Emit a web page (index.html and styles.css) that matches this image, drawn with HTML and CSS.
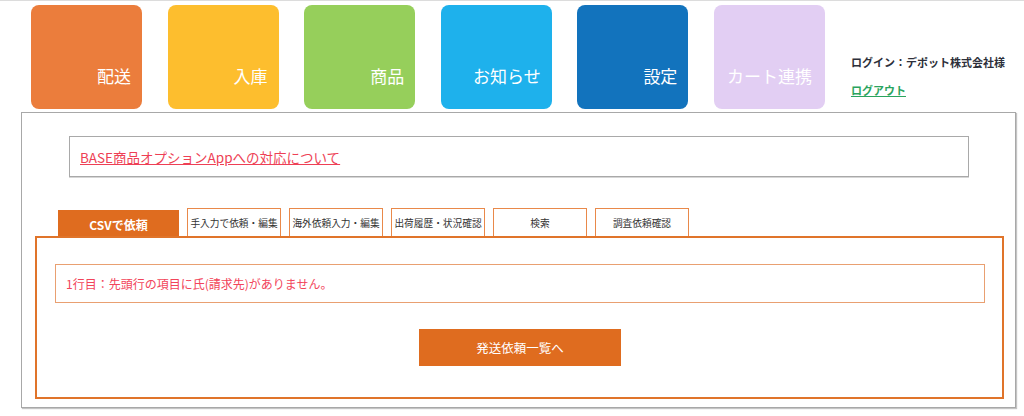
FILE: index.html
```html
<!DOCTYPE html>
<html lang="ja">
<head>
<meta charset="utf-8">
<title>CSVで依頼</title>
<link rel="stylesheet" href="styles.css">
</head>
<body>
<header class="top">
  <nav class="tiles">
    <a class="tile tile-ship" href="#">配送</a>
    <a class="tile tile-stock" href="#">入庫</a>
    <a class="tile tile-item" href="#">商品</a>
    <a class="tile tile-news" href="#">お知らせ</a>
    <a class="tile tile-setting" href="#">設定</a>
    <a class="tile tile-cart" href="#">カート連携</a>
  </nav>
  <div class="user">
    <p class="user-name">ログイン：デポット株式会社様</p>
    <a class="logout" href="#">ログアウト</a>
  </div>
</header>
<main class="panel">
  <div class="notice"><a href="#">BASE商品オプションAppへの対応について</a></div>
  <div class="tabs">
    <span class="tab tab-active">CSVで依頼</span>
    <a class="tab" href="#">手入力で依頼・編集</a>
    <a class="tab" href="#">海外依頼入力・編集</a>
    <a class="tab" href="#">出荷履歴・状況確認</a>
    <a class="tab" href="#">検索</a>
    <a class="tab" href="#">調査依頼確認</a>
  </div>
  <section class="tab-body">
    <div class="error">1行目：先頭行の項目に氏(請求先)がありません。</div>
    <div class="actions"><a class="btn" href="#">発送依頼一覧へ</a></div>
  </section>
</main>
</body>
</html>
```
FILE: styles.css
```css
* { box-sizing: border-box; }
html, body { margin: 0; padding: 0; }
body {
  background: #fff;
  border-top: 1px solid #dcdcdc;
  font-family: "Noto Sans CJK JP", "Noto Sans", sans-serif;
  color: #333;
  width: 1024px;
  height: 416px;
  overflow: hidden;
}
a { text-decoration: none; }
p { margin: 0; }

.top {
  display: flex;
  padding: 4px 0 0 31px;
}
.tiles {
  display: flex;
  gap: 25.6px;
}
.tile {
  width: 111px;
  height: 104px;
  border-radius: 8px;
  display: flex;
  align-items: flex-end;
  justify-content: flex-end;
  padding: 0 11px 23px 0;
  color: #fff;
  font-size: 17px;
  line-height: 20px;
}
.tile-ship { background: #eb7d3c; }
.tile-stock { background: #fdbe2e; }
.tile-item { background: #96cf5b; }
.tile-news { background: #1eb1ec; }
.tile-setting { background: #1273bd; }
.tile-cart { background: #e2cef3; padding-right: 13px; }

.user {
  margin: 49px 0 0 26px;
  display: flex;
  flex-direction: column;
  gap: 12px;
  font-size: 11px;
  line-height: 16px;
  font-weight: bold;
}
.user-name { color: #2d2f3a; }
.logout {
  color: #2aa45e;
  text-decoration: underline;
  align-self: flex-start;
}

.panel {
  margin: 3px 8px 0 21px;
  height: 296px;
  border: 1px solid #a8a8a8;
  box-shadow: 1px 1px 1px #c4c4c4;
  padding: 23px 0 0 0;
}
.notice {
  margin: 0 46px 0 47px;
  height: 41px;
  border: 1px solid #a9a9a9;
  box-shadow: 0 1px 0 #d6d6d6;
  display: flex;
  align-items: center;
  padding-left: 10px;
}
.notice a {
  color: #ee3f55;
  text-decoration: underline;
  font-size: 13.5px;
  line-height: 18px;
}

.tabs {
  display: flex;
  align-items: flex-end;
  gap: 8px;
  margin: 31px 0 0 36px;
}
.tab {
  width: 94px;
  height: 28px;
  border: 1px solid #e9894a;
  border-bottom: none;
  display: flex;
  align-items: center;
  justify-content: center;
  font-size: 9.7px;
  color: #333;
  white-space: nowrap;
}
.tab-active {
  width: 121px;
  height: 26px;
  border: none;
  background: #df6c1f;
  color: #fff;
  font-size: 12px;
  font-weight: bold;
  padding-top: 3px;
}

.tab-body {
  margin: 0 11px 0 13px;
  border: 2px solid #e0742a;
  padding: 26px 17px 31px 18px;
}
.error {
  height: 39px;
  border: 1px solid #e9a071;
  display: flex;
  align-items: center;
  padding-left: 10px;
  color: #f2445a;
  font-size: 12px;
}
.actions {
  display: flex;
  justify-content: center;
  margin-top: 26px;
}
.btn {
  width: 202px;
  height: 37px;
  background: #df6c1f;
  color: #fff;
  font-size: 12.5px;
  display: flex;
  align-items: center;
  justify-content: center;
}
```
